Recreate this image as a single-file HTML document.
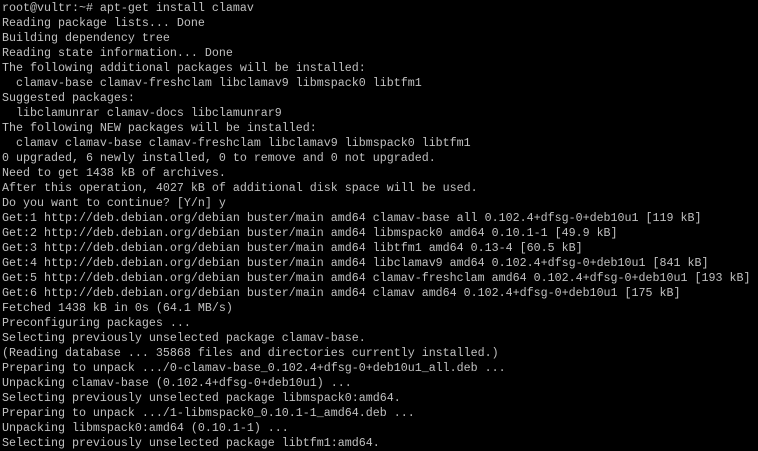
<!DOCTYPE html>
<html><head><style>
html,body{margin:0;padding:0;background:#000;width:758px;height:451px;overflow:hidden}
pre{margin:0;padding:1px 0 0 2px;font-family:"Liberation Mono",monospace;font-size:11.67px;line-height:15px;color:#c0c0c0;white-space:pre}
</style></head><body><pre>root@vultr:~# apt-get install clamav
Reading package lists... Done
Building dependency tree
Reading state information... Done
The following additional packages will be installed:
  clamav-base clamav-freshclam libclamav9 libmspack0 libtfm1
Suggested packages:
  libclamunrar clamav-docs libclamunrar9
The following NEW packages will be installed:
  clamav clamav-base clamav-freshclam libclamav9 libmspack0 libtfm1
0 upgraded, 6 newly installed, 0 to remove and 0 not upgraded.
Need to get 1438 kB of archives.
After this operation, 4027 kB of additional disk space will be used.
Do you want to continue? [Y/n] y
Get:1 http://deb.debian.org/debian buster/main amd64 clamav-base all 0.102.4+dfsg-0+deb10u1 [119 kB]
Get:2 http://deb.debian.org/debian buster/main amd64 libmspack0 amd64 0.10.1-1 [49.9 kB]
Get:3 http://deb.debian.org/debian buster/main amd64 libtfm1 amd64 0.13-4 [60.5 kB]
Get:4 http://deb.debian.org/debian buster/main amd64 libclamav9 amd64 0.102.4+dfsg-0+deb10u1 [841 kB]
Get:5 http://deb.debian.org/debian buster/main amd64 clamav-freshclam amd64 0.102.4+dfsg-0+deb10u1 [193 kB]
Get:6 http://deb.debian.org/debian buster/main amd64 clamav amd64 0.102.4+dfsg-0+deb10u1 [175 kB]
Fetched 1438 kB in 0s (64.1 MB/s)
Preconfiguring packages ...
Selecting previously unselected package clamav-base.
(Reading database ... 35868 files and directories currently installed.)
Preparing to unpack .../0-clamav-base_0.102.4+dfsg-0+deb10u1_all.deb ...
Unpacking clamav-base (0.102.4+dfsg-0+deb10u1) ...
Selecting previously unselected package libmspack0:amd64.
Preparing to unpack .../1-libmspack0_0.10.1-1_amd64.deb ...
Unpacking libmspack0:amd64 (0.10.1-1) ...
Selecting previously unselected package libtfm1:amd64.</pre></body></html>
